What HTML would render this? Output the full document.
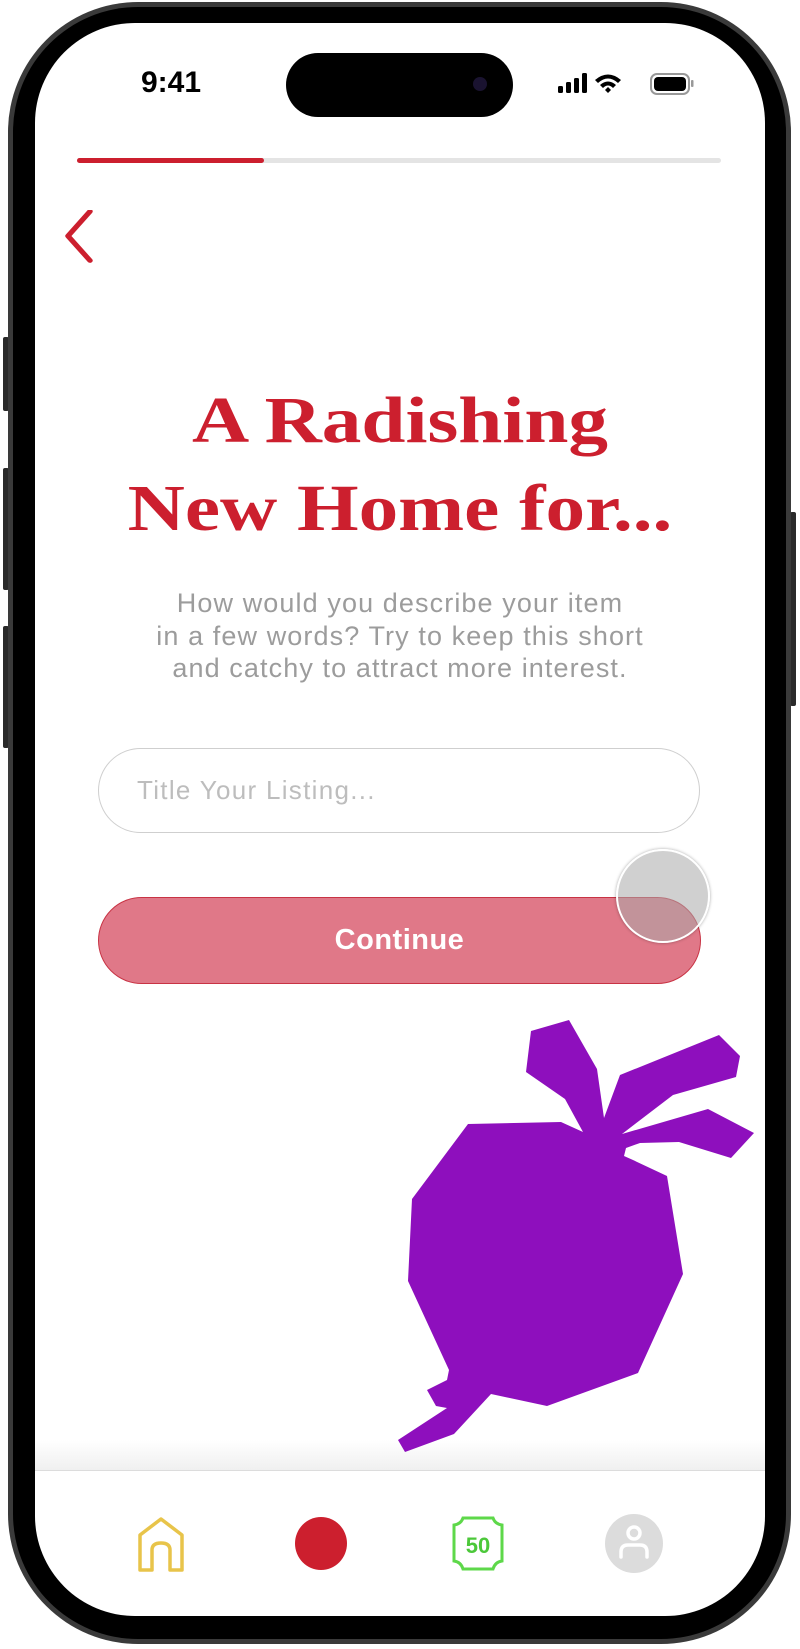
<!DOCTYPE html>
<html><head><meta charset="utf-8"><style>
html,body{margin:0;padding:0;background:#fff;}
body{width:800px;height:1649px;position:relative;overflow:hidden;font-family:"Liberation Sans",sans-serif;}
.abs{position:absolute;}
.frame{left:8px;top:2px;width:783px;height:1642px;border-radius:130px;background:#3a3a3a;}
.frame2{left:13px;top:7px;width:773px;height:1632px;border-radius:125px;background:#000;}
.screen{left:35px;top:23px;width:730px;height:1593px;border-radius:100px;background:#fff;overflow:hidden;}
.btn{background:#2a2a2a;border-radius:2px;}
.title{left:0;width:800px;text-align:center;font-family:"Liberation Serif",serif;font-weight:bold;font-size:66px;color:#cc1f2e;line-height:88px;transform:scaleX(1.2);}
.sub{left:0;width:800px;text-align:center;color:#9c9c9c;font-size:27px;line-height:32.5px;top:587px;letter-spacing:1.1px;}
</style></head><body>
<div class="abs btn" style="left:3px;top:337px;width:6px;height:74px"></div>
<div class="abs btn" style="left:3px;top:468px;width:6px;height:122px"></div>
<div class="abs btn" style="left:3px;top:626px;width:6px;height:122px"></div>
<div class="abs btn" style="left:790px;top:512px;width:6px;height:194px"></div>
<div class="abs frame"></div>
<div class="abs frame2"></div>
<div class="abs screen"></div>

<div class="abs" style="left:128px;top:65px;width:86px;font-size:30px;font-weight:bold;color:#000;text-align:center;line-height:36px">9:41</div>
<div class="abs" style="left:286px;top:53px;width:227px;height:64px;border-radius:32px;background:#000"></div>
<div class="abs" style="left:473px;top:77px;width:14px;height:14px;border-radius:7px;background:#1a1330"></div>
<svg class="abs" style="left:555px;top:70px" width="150" height="28" viewBox="0 0 150 28">
<rect x="3" y="16" width="5" height="7" rx="1.5"/><rect x="11" y="12" width="5" height="11" rx="1.5"/><rect x="19" y="8" width="5" height="15" rx="1.5"/><rect x="27" y="3" width="5" height="20" rx="1.5"/>
<path d="M40 10 Q53 -1 66 10 L63 13 Q53 4 43 13Z"/><path d="M45 15 Q53 8 61 15 L58 18 Q53 13 48 18Z"/><path d="M50 20 L53 17 L56 20 L53 23Z"/>
<rect x="96" y="4" width="38" height="20" rx="6" fill="none" stroke="#999" stroke-width="2"/><rect x="99" y="7" width="32" height="14" rx="4"/><rect x="136" y="10" width="2.5" height="7" rx="1" fill="#999"/>
</svg>

<div class="abs" style="left:77px;top:158px;width:644px;height:5px;border-radius:3px;background:#e4e4e4"></div>
<div class="abs" style="left:77px;top:158px;width:187px;height:5px;border-radius:3px;background:#cc1f2e"></div>

<svg class="abs" style="left:55px;top:210px" width="50" height="60"><path d="M35 9 L13 39 L35 69" transform="translate(0,-6) scale(1,0.82)" fill="none" stroke="#cc1f2e" stroke-width="5.5" stroke-linecap="round" stroke-linejoin="round"/></svg>

<div class="abs title" style="top:377px">A Radishing</div>
<div class="abs title" style="top:465px">New Home for...</div>

<div class="abs sub">How would you describe your item<br>in a few words? Try to keep this short<br>and catchy to attract more interest.</div>

<div class="abs" style="left:98px;top:748px;width:602px;height:85px;border:1.5px solid #cfcfcf;border-radius:44px;box-sizing:border-box"></div>
<div class="abs" style="left:137px;top:774px;font-size:26px;letter-spacing:1.3px;color:#bdbdbd;line-height:32px">Title Your Listing...</div>

<div class="abs" style="left:98px;top:897px;width:603px;height:87px;background:#e07888;border:1.5px solid #c83344;border-radius:44px;box-sizing:border-box;color:#fff;font-size:29px;letter-spacing:0.5px;font-weight:bold;text-align:center;line-height:84px">Continue</div>
<div class="abs" style="left:616px;top:849px;width:94px;height:94px;border-radius:50%;background:rgba(170,170,170,0.55);border:2px solid #fff;box-sizing:border-box;box-shadow:0 0 3px rgba(0,0,0,0.35)"></div>

<div class="abs" style="left:35px;top:1440px;width:730px;height:30px;background:linear-gradient(#fff,#f0f0f0)"></div>
<div class="abs" style="left:35px;top:1470px;width:730px;height:1px;background:#dcdcdc"></div>

<svg class="abs" style="left:0;top:0" width="800" height="1649">
<polygon fill="#8e0fbd" points="468,1124 561,1122 583,1132 565,1099 526,1072 531,1031 569,1020 597,1069 604,1118 620,1075 719,1035 740,1056 736,1077 673,1095 622,1134 708,1109 754,1133 731,1158 679,1142 640,1143 626,1148 624,1156 633,1160 667,1176 683,1274 638,1373 547,1406 491,1394 454,1434 405,1452 398,1440 447,1408 436,1406 427,1390 447,1380 449,1370 408,1281 412,1199"/>
</svg>

<svg class="abs" style="left:135px;top:1515px" width="56" height="60">
<path d="M5 55 L5 20 L26 4 L47 20 L47 55 L35 55 L35 35 Q35 28 26 28 Q17 28 17 35 L17 55 Z" fill="none" stroke="#e8c44a" stroke-width="3.5" stroke-linejoin="round"/>
</svg>
<div class="abs" style="left:295px;top:1517px;width:52px;height:53px;border-radius:50%;background:#cc1f2e"></div>
<svg class="abs" style="left:449px;top:1515px" width="58" height="58">
<path d="M14 3 L44 3 Q46 9 53 10 L53 46 Q46 47 44 54 L14 54 Q12 47 5 46 L5 10 Q12 9 14 3Z" fill="#fff" stroke="#5ed84a" stroke-width="3"/>
<text x="29" y="38" text-anchor="middle" font-family="Liberation Sans" font-weight="bold" font-size="22" fill="#4cc83a">50</text>
</svg>
<div class="abs" style="left:605px;top:1514px;width:58px;height:59px;border-radius:50%;background:#dcdcdc"></div>
<svg class="abs" style="left:605px;top:1514px" width="58" height="59">
<circle cx="29" cy="19" r="6" fill="none" stroke="#fff" stroke-width="3.5"/>
<path d="M16 43 L16 38 Q16 31 23 31 L35 31 Q42 31 42 38 L42 43" fill="none" stroke="#fff" stroke-width="3.5" stroke-linecap="round"/>
</svg>
</body></html>
